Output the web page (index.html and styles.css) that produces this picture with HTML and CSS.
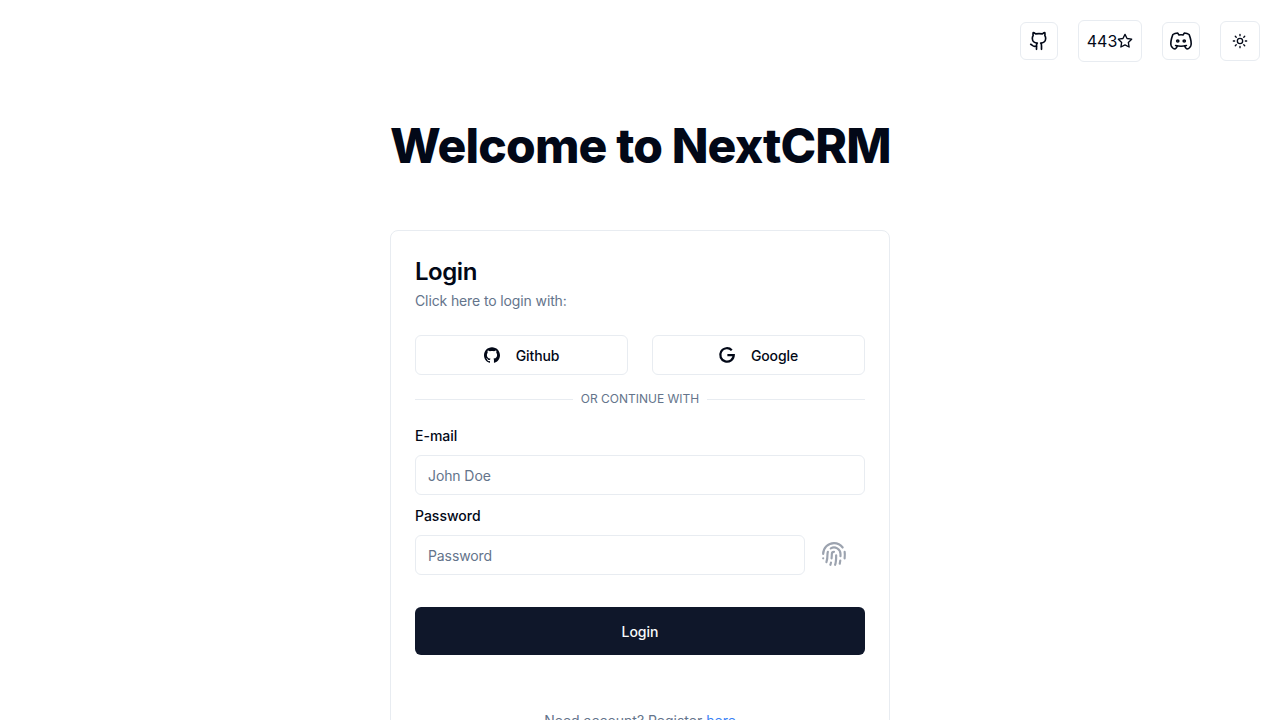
FILE: index.html
```html
<!DOCTYPE html>
<html lang="en">
<head>
  <meta charset="UTF-8">
  <meta name="viewport" content="width=device-width, initial-scale=1.0">
  <title>Welcome to NextCRM</title>
  <link rel="stylesheet" href="styles.css">
</head>
<body>
  <header class="topbar">
    <a class="icon-btn" href="#" aria-label="GitHub">
      <svg class="icon-line" width="20" height="20" viewBox="0 0 24 24">
        <path d="M15 22v-4a4.8 4.8 0 0 0-1-3.5c3 0 6-2 6-5.5.08-1.25-.27-2.48-1-3.5.28-1.15.28-2.35 0-3.5 0 0-1 0-3 1.5-2.64-.5-5.36-.5-8 0C6 2 5 2 5 2c-.3 1.15-.3 2.35 0 3.5A5.403 5.403 0 0 0 4 9c0 3.5 3 5.5 6 5.5-.39.49-.68 1.05-.85 1.65-.17.6-.22 1.23-.15 1.85v4"/>
        <path d="M9 18c-4.51 2-5-2-7-2"/>
      </svg>
    </a>
    <a class="icon-btn star-btn" href="#">
      <span>443</span>
      <svg class="icon-line" width="16" height="16" viewBox="0 0 24 24">
        <path d="M12 2l3.09 6.26L22 9.27l-5 4.87 1.18 6.88L12 17.77l-6.18 3.25L7 14.14 2 9.27l6.91-1.01L12 2z"/>
      </svg>
    </a>
    <a class="icon-btn" href="#" aria-label="Discord">
      <svg class="icon-line icon-thin" width="26" height="24" viewBox="0 0 24 24" preserveAspectRatio="none">
        <path d="M8 12a1 1 0 1 0 2 0a1 1 0 0 0 -2 0"/>
        <path d="M14 12a1 1 0 1 0 2 0a1 1 0 0 0 -2 0"/>
        <path d="M15.5 17c0 1 1.5 3 2 3c1.5 0 2.833 -1.667 3.5 -3c.667 -1.667 .5 -5.833 -1.5 -11.5c-1.457 -1.015 -3 -1.34 -4.5 -1.5l-.972 1.923a11.913 11.913 0 0 0 -4.053 0l-.975 -1.923c-1.5 .16 -3.043 .485 -4.5 1.5c-2 5.667 -2.167 9.833 -1.5 11.5c.667 1.333 2 3 3.5 3c.5 0 2 -2 2 -3"/>
        <path d="M7 16.5c3.5 1 6.5 1 10 0"/>
      </svg>
    </a>
    <button class="icon-btn theme-btn" aria-label="Toggle theme">
      <svg class="icon-line" width="16" height="16" viewBox="0 0 24 24">
        <circle cx="12" cy="12" r="4"/>
        <path d="M12 2v2M12 20v2M4.93 4.93l1.41 1.41M17.66 17.66l1.41 1.41M2 12h2M20 12h2M6.34 17.66l-1.41 1.41M19.07 4.93l-1.41 1.41"/>
      </svg>
    </button>
  </header>

  <main class="content">
    <h1 class="welcome">Welcome to NextCRM</h1>

    <section class="card">
      <h2 class="card-title">Login</h2>
      <p class="card-desc">Click here to login with:</p>

      <div class="oauth-row">
        <button class="oauth-btn">
          <svg class="icon-fill" width="16" height="16" viewBox="0 0 24 24">
            <path d="M12 .297c-6.63 0-12 5.373-12 12 0 5.303 3.438 9.8 8.205 11.385.6.113.82-.258.82-.577 0-.285-.01-1.04-.015-2.04-3.338.724-4.042-1.61-4.042-1.61C4.422 18.07 3.633 17.7 3.633 17.7c-1.087-.744.084-.729.084-.729 1.205.084 1.838 1.236 1.838 1.236 1.07 1.835 2.809 1.305 3.495.998.108-.776.417-1.305.76-1.605-2.665-.3-5.466-1.332-5.466-5.93 0-1.31.465-2.38 1.235-3.22-.135-.303-.54-1.523.105-3.176 0 0 1.005-.322 3.3 1.23.96-.267 1.98-.399 3-.405 1.02.006 2.04.138 3 .405 2.28-1.552 3.285-1.23 3.285-1.23.645 1.653.24 2.873.12 3.176.765.84 1.23 1.91 1.23 3.22 0 4.61-2.805 5.625-5.475 5.92.42.36.81 1.096.81 2.22 0 1.606-.015 2.896-.015 3.286 0 .315.21.69.825.57C20.565 22.092 24 17.592 24 12.297c0-6.627-5.373-12-12-12"/>
          </svg>
          <span>Github</span>
        </button>
        <button class="oauth-btn">
          <svg class="icon-google" width="18" height="18" viewBox="0 0 24 24">
            <path d="M18.4 5.6A9 9 0 1 0 21 12H12.5"/>
          </svg>
          <span>Google</span>
        </button>
      </div>

      <div class="separator"><span>OR CONTINUE WITH</span></div>

      <form class="login-form">
        <label class="field-label" for="email">E-mail</label>
        <input class="field-input" id="email" type="text" placeholder="John Doe">

        <label class="field-label field-label-next" for="password">Password</label>
        <div class="password-row">
          <input class="field-input" id="password" type="password" placeholder="Password">
          <svg class="fingerprint" width="26" height="26" viewBox="0 0 24 24">
            <path d="M2 12C2 6.5 6.5 2 12 2a10 10 0 0 1 8 4"/>
            <path d="M5 19.5C5.5 18 6 15 6 12c0-.7.12-1.37.34-2"/>
            <path d="M17.29 21.02c.12-.6.43-2.3.5-3.02"/>
            <path d="M12 10a2 2 0 0 0-2 2c0 1.02-.1 2.51-.26 4"/>
            <path d="M8.65 22c.21-.66.45-1.32.57-2"/>
            <path d="M14 13.12c0 2.38 0 6.38-1 8.88"/>
            <path d="M2 16h.01"/>
            <path d="M21.8 16c.2-2 .131-5.354 0-6"/>
            <path d="M9 6.8a6 6 0 0 1 9 5.2c0 .47 0 1.17-.02 2"/>
          </svg>
        </div>

        <button class="login-btn" type="button">Login</button>
      </form>

      <p class="card-foot">Need account? Register <a href="#">here</a></p>
    </section>
  </main>
</body>
</html>
```

FILE: styles.css
```css
html, body {
  height: 100%;
  overflow: hidden;
}
body {
  margin: 0;
  background: #fff;
  color: #020817;
  font-family: Inter, "Liberation Sans", sans-serif;
}
.topbar {
  display: flex;
  justify-content: flex-end;
  align-items: center;
  gap: 20px;
  padding: 20px 20px 0;
  height: 42px;
}
.icon-btn {
  display: flex;
  align-items: center;
  justify-content: center;
  box-sizing: border-box;
  width: 38px;
  height: 38px;
  padding: 0;
  border: 1px solid #e8ecf1;
  border-radius: 6px;
  background: #fff;
  color: #020817;
  text-decoration: none;
}
.star-btn {
  width: 64px;
  height: 42px;
  font-size: 16px;
}
.theme-btn {
  width: 40px;
  height: 40px;
}
.icon-line {
  fill: none;
  stroke: currentColor;
  stroke-width: 2;
  stroke-linecap: round;
  stroke-linejoin: round;
}
.icon-thin {
  stroke-width: 1.5;
}
.icon-fill {
  fill: #020817;
}
.icon-google {
  fill: none;
  stroke: #020817;
  stroke-width: 3;
  margin: 0 -1px;
}
.content {
  width: 500px;
  margin: 0 auto;
}
.welcome {
  margin: 51px 0 51px;
  font-size: 48px;
  line-height: 66px;
  font-weight: 800;
  letter-spacing: -0.85px;
  text-align: center;
  white-space: nowrap;
}
.card {
  box-sizing: border-box;
  padding: 24px;
  border: 1px solid #e8ecf1;
  border-radius: 8px;
}
.card-title {
  margin: 0;
  font-size: 24px;
  line-height: 34px;
  font-weight: 600;
  letter-spacing: -0.45px;
}
.card-desc {
  margin: 2px 0 0;
  font-size: 14px;
  line-height: 20px;
  letter-spacing: -0.12px;
  color: #64748b;
}
.oauth-row {
  display: grid;
  grid-template-columns: 1fr 1fr;
  gap: 24px;
  margin-top: 24px;
}
.oauth-btn {
  display: flex;
  align-items: center;
  justify-content: center;
  gap: 16px;
  height: 40px;
  padding: 0;
  border: 1px solid #e8ecf1;
  border-radius: 6px;
  background: #fff;
  color: #020817;
  font-family: inherit;
  font-size: 14px;
  font-weight: 500;
  letter-spacing: -0.1px;
}
.separator {
  display: flex;
  align-items: center;
  gap: 8px;
  margin-top: 16px;
  font-size: 12px;
  line-height: 16px;
  color: #64748b;
}
.separator::before,
.separator::after {
  content: "";
  flex: 1;
  border-top: 1px solid #e8ecf1;
}
.login-form {
  display: flex;
  flex-direction: column;
  margin-top: 19px;
}
.field-label {
  font-size: 14px;
  line-height: 20px;
  font-weight: 500;
  margin-bottom: 9px;
}
.field-label-next {
  margin-top: 11px;
}
.field-input {
  box-sizing: border-box;
  width: 100%;
  height: 40px;
  padding: 0 12px;
  border: 1px solid #e8ecf1;
  border-radius: 6px;
  background: #fff;
  color: #020817;
  font-family: inherit;
  font-size: 14px;
  letter-spacing: -0.1px;
  outline: none;
}
.field-input::placeholder {
  color: #64748b;
}
.password-row {
  display: flex;
  align-items: center;
  gap: 16px;
}
.password-row .field-input {
  width: 390px;
}
.fingerprint {
  flex: none;
  margin-top: -2px;
  fill: none;
  stroke: #9ca3af;
  stroke-width: 2;
  stroke-linecap: round;
  stroke-linejoin: round;
}
.login-btn {
  height: 48px;
  margin-top: 32px;
  border: none;
  border-radius: 6px;
  background: #0f172a;
  color: #f8fafc;
  font-family: inherit;
  font-size: 14px;
  font-weight: 500;
}
.card-foot {
  margin: 56px 0 0;
  font-size: 14px;
  line-height: 20px;
  color: #64748b;
  text-align: center;
}
.card-foot a {
  color: #3b82f6;
  text-decoration: none;
}
```
